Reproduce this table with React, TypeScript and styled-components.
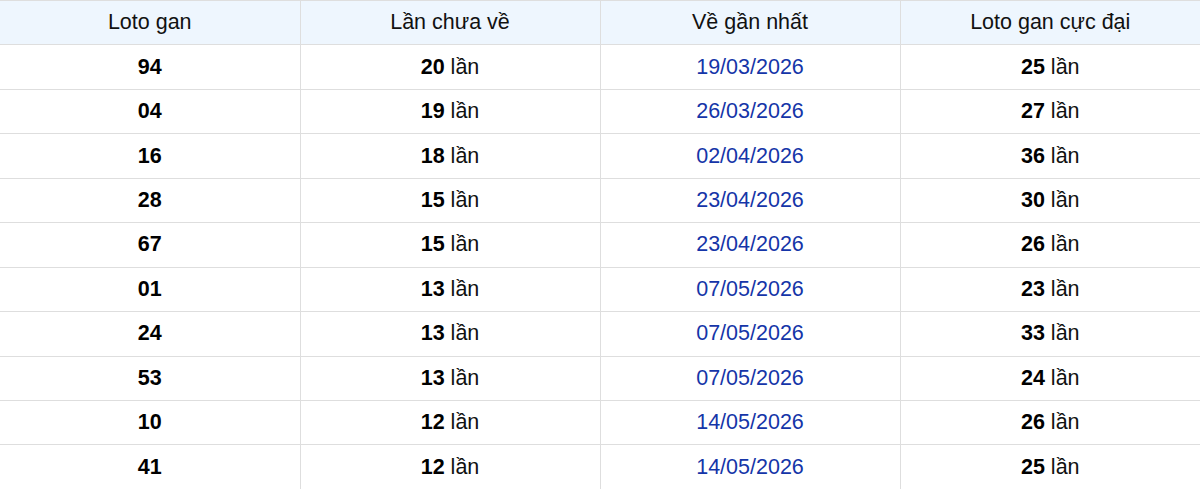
import React from "react";
import styled, { createGlobalStyle } from "styled-components";

const GlobalStyle = createGlobalStyle`
  html, body {
    margin: 0;
    padding: 0;
    background: #fff;
  }
  body {
    font-family: "Liberation Sans", Arial, sans-serif;
  }
`;

type Row = { num: string; current: number; last: string; max: number };

const rows: Row[] = [
  { num: "94", current: 20, last: "19/03/2026", max: 25 },
  { num: "04", current: 19, last: "26/03/2026", max: 27 },
  { num: "16", current: 18, last: "02/04/2026", max: 36 },
  { num: "28", current: 15, last: "23/04/2026", max: 30 },
  { num: "67", current: 15, last: "23/04/2026", max: 26 },
  { num: "01", current: 13, last: "07/05/2026", max: 23 },
  { num: "24", current: 13, last: "07/05/2026", max: 33 },
  { num: "53", current: 13, last: "07/05/2026", max: 24 },
  { num: "10", current: 12, last: "14/05/2026", max: 26 },
  { num: "41", current: 12, last: "14/05/2026", max: 25 },
];

const App: React.FC = () => {
  return (
    <>
      <GlobalStyle />
      <Table>
        <colgroup>
          <col />
          <col />
          <col />
          <col />
        </colgroup>
        <thead>
          <tr>
            <HeadCell>Loto gan</HeadCell>
            <HeadCell>Lần chưa về</HeadCell>
            <HeadCell>Về gần nhất</HeadCell>
            <HeadCell>Loto gan cực đại</HeadCell>
          </tr>
        </thead>
        <tbody>
          {rows.map((r) => (
            <tr key={r.num}>
              <Cell>
                <b>{r.num}</b>
              </Cell>
              <Cell>
                <b>{r.current}</b> lần
              </Cell>
              <Cell $date>{r.last}</Cell>
              <Cell>
                <b>{r.max}</b> lần
              </Cell>
            </tr>
          ))}
        </tbody>
      </Table>
    </>
  );
};

// styles
const Table = styled.table`
  width: 100%;
  border-collapse: collapse;
  table-layout: fixed;
  font-size: 21.5px;
  color: #111;
  col {
    width: 25%;
  }
  tr {
    height: 44.45px;
  }
  th:first-child,
  td:first-child {
    border-left: none;
  }
  th:last-child,
  td:last-child {
    border-right: none;
  }
`;

const HeadCell = styled.th`
  background: #eef6fe;
  font-weight: 400;
  color: #111;
  text-align: center;
  padding: 0;
  border: 1px solid #dedede;
`;

const Cell = styled.td<{ $date?: boolean }>`
  text-align: center;
  padding: 0;
  border: 1px solid #dedede;
  color: ${(p) => (p.$date ? "#1535a8" : "#111")};
  b {
    font-weight: 700;
    color: #000;
  }
`;

export default App;
